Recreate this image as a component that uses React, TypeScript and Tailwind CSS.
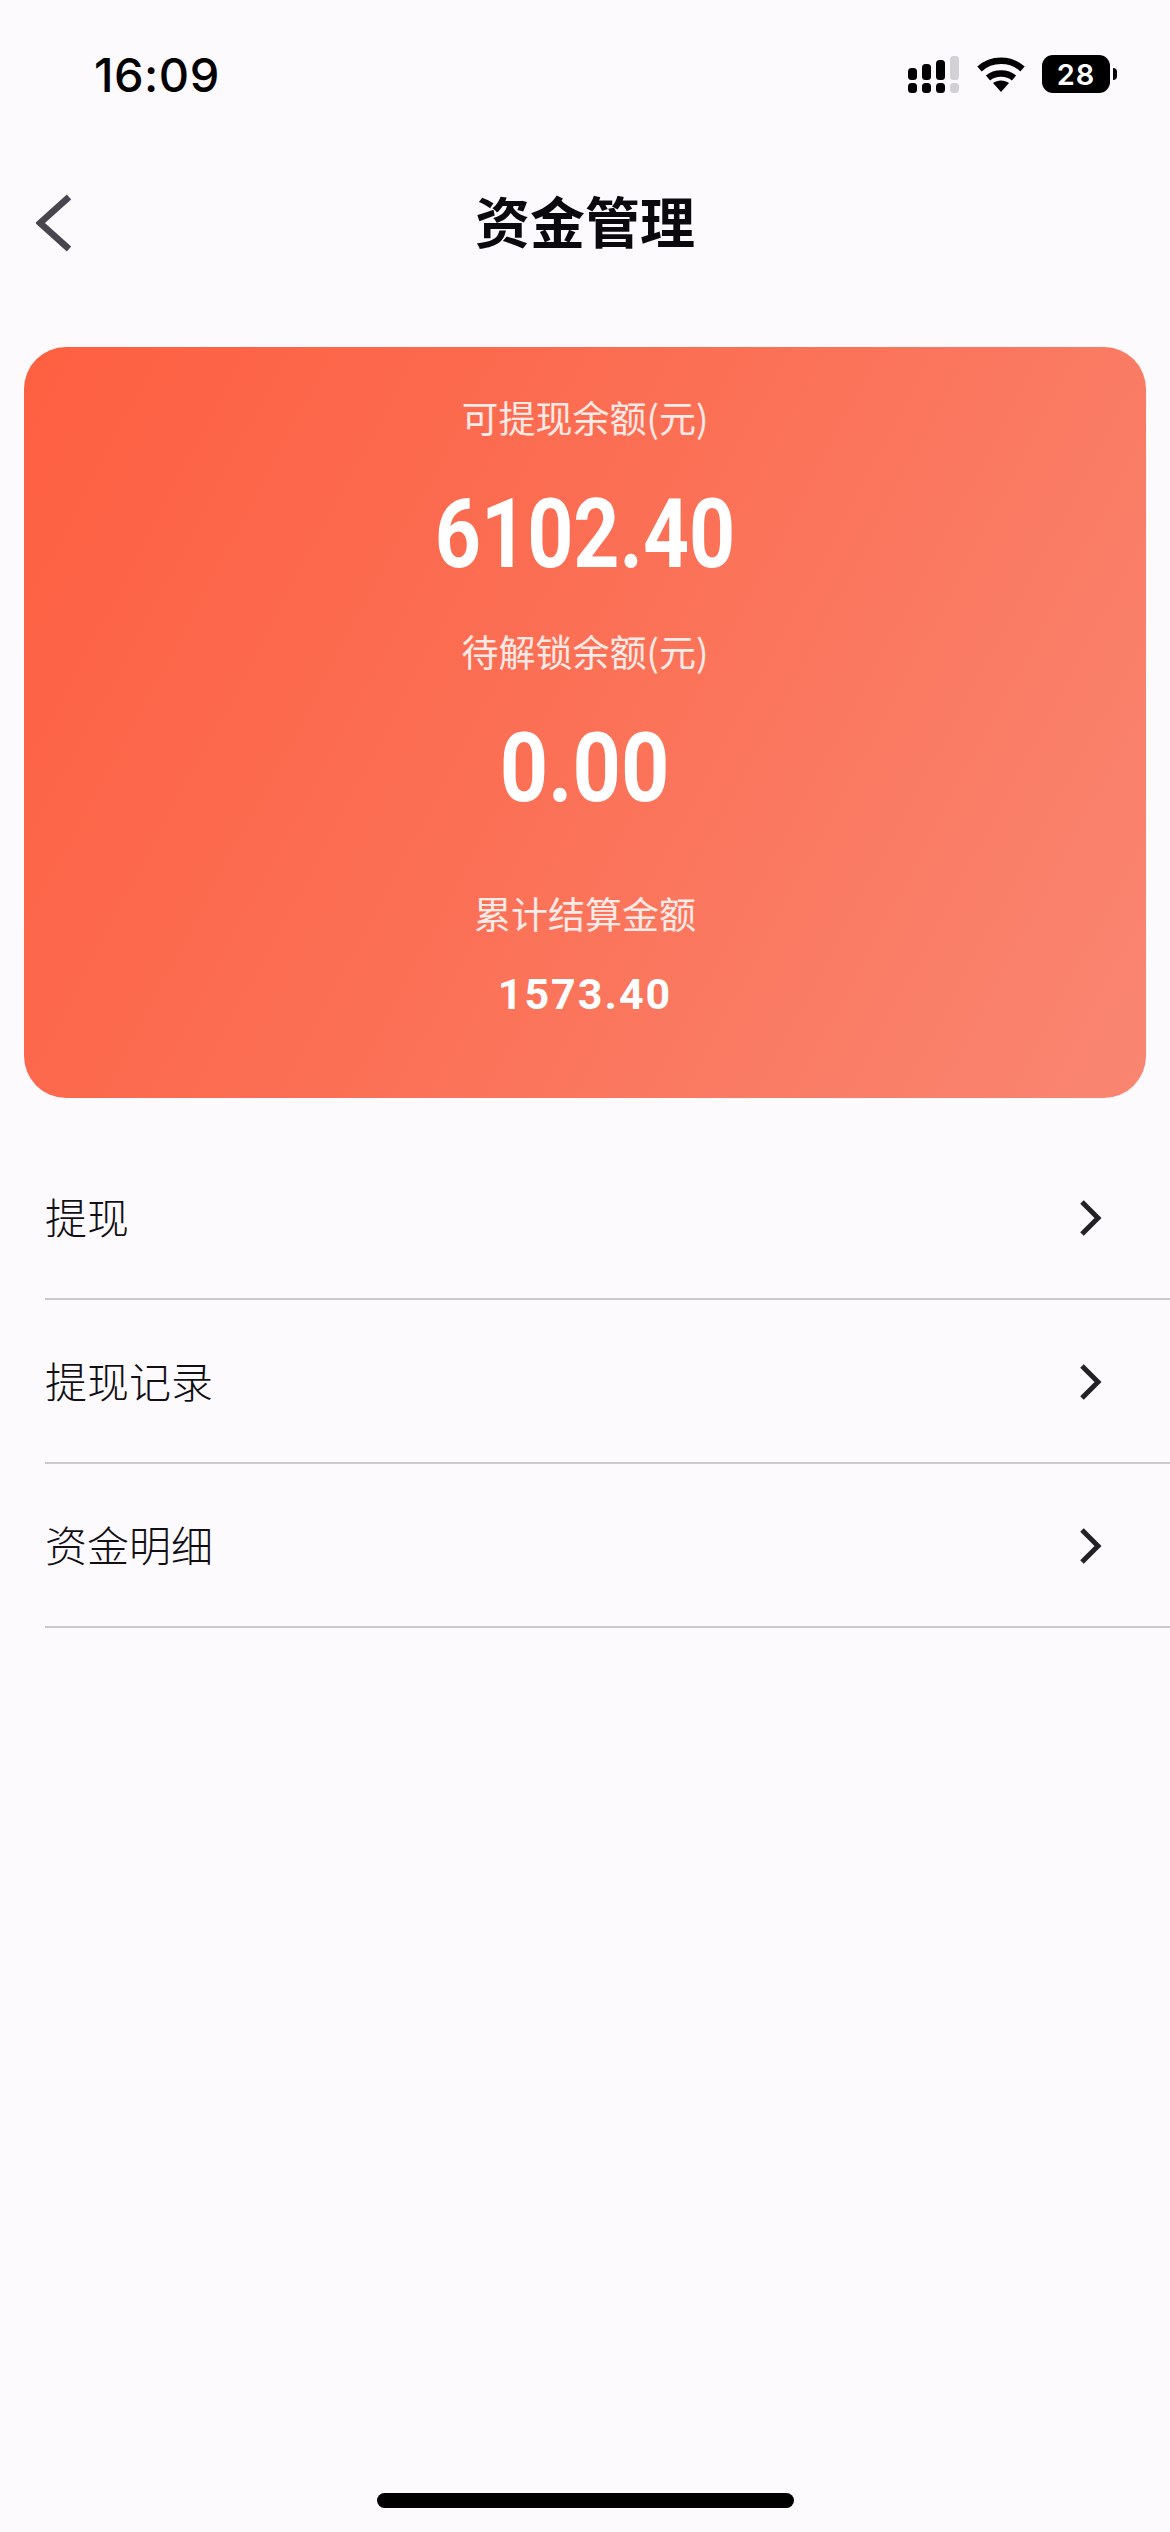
import React from "react";

const FONT = "font-['Noto_Sans_CJK_SC','Noto_Sans',sans-serif]";

const MENU = ["提现", "提现记录", "资金明细"];

function Signal() {
    const cols = [
        { x: 0, tall: 11, color: "#000" },
        { x: 14, tall: 15, color: "#000" },
        { x: 28, tall: 19, color: "#000" },
        { x: 42, tall: 23, color: "#d2d0d4" },
    ];
    return (
        <svg width="52" height="37" viewBox="0 0 52 37">
            {cols.map((c) => (
                <g key={c.x} fill={c.color}>
                    <rect x={c.x} y={24 - c.tall - 1} width="9" height={c.tall + 1} rx="3.5" />
                    <rect x={c.x} y="27" width="9" height="10" rx="3.5" />
                </g>
            ))}
        </svg>
    );
}

function Wifi() {
    return (
        <svg width="48" height="36" viewBox="0 0 48 36">
            <path d="M2.5 13 C14.5 2 33.5 2 45.5 13" fill="none" stroke="#000" strokeWidth="6.5" />
            <path d="M11 22 C18 16 30 16 37 22" fill="none" stroke="#000" strokeWidth="6.5" />
            <path d="M16 27 C20.5 23.5 27.5 23.5 32 27 L24 36 Z" fill="#000" />
        </svg>
    );
}

function Chevron({ left = false, color, width, height, stroke }: { left?: boolean; color: string; width: number; height: number; stroke: number }) {
    return (
        <svg width={width} height={height} viewBox={`0 0 ${width} ${height}`}>
            <path
                d={left
                    ? `M${width - 3} 3 L4 ${height / 2} L${width - 3} ${height - 3}`
                    : `M3 3 L${width - 4} ${height / 2} L3 ${height - 3}`}
                fill="none"
                stroke={color}
                strokeWidth={stroke}
            />
        </svg>
    );
}

export default function App() {
    return (
        <div className={`flex flex-col w-[1170px] h-[2532px] bg-[#fdfafe] overflow-hidden ${FONT}`}>
            {/* status bar */}
            <div className="flex items-center justify-between h-[148px] pl-[94px] pr-[53px] shrink-0">
                <span className="font-['Inter',sans-serif] text-[47px] font-medium text-black leading-none tracking-[0.5px]">16:09</span>
                <div className="flex items-center">
                    <Signal />
                    <div className="ml-[17px]"><Wifi /></div>
                    <div className="flex items-center ml-[17px]">
                        <div className="flex items-center justify-center w-[68px] h-[38px] rounded-[11px] bg-black">
                            <span className="font-['Inter',sans-serif] text-[29px] font-semibold text-white leading-none tracking-[1px]">28</span>
                        </div>
                        <div className="w-[4px] h-[12px] ml-[3px] rounded-r-full bg-black" />
                    </div>
                </div>
            </div>

            {/* header */}
            <div className="relative flex items-center justify-center h-[150px] shrink-0">
                <div className="absolute left-[36px] top-[46px]">
                    <Chevron left color="#49454f" width={36} height={58} stroke={6.5} />
                </div>
                <h1 className="mb-[8px] text-[55px] font-bold text-[#0b090d] leading-none">资金管理</h1>
            </div>

            {/* balance card */}
            <div className="flex flex-col items-center h-[751px] mx-[24px] mt-[49px] pt-[44px] rounded-[42px] bg-[linear-gradient(118deg,#fe5f41_0%,#fb6f54_45%,#f98672_100%)] text-white shrink-0">
                <p className="text-[37px] leading-[52px] text-white/85">可提现余额(元)</p>
                <p className="mt-[41px] font-['Roboto',sans-serif] text-[97px] font-bold leading-[100px] scale-x-[0.83]">6102.40</p>
                <p className="mt-[41px] text-[37px] leading-[52px] text-white/85">待解锁余额(元)</p>
                <p className="mt-[41px] font-['Roboto',sans-serif] text-[97px] font-bold leading-[100px] scale-x-[0.87]">0.00</p>
                <p className="mt-[69px] text-[37px] leading-[52px] text-white/85">累计结算金额</p>
                <p className="mt-[30px] font-['Roboto',sans-serif] text-[43px] font-bold leading-[50px] tracking-[2px]">1573.40</p>
            </div>

            {/* menu */}
            <div className="flex flex-col ml-[45px] mt-[38px]">
                {MENU.map((label) => (
                    <div key={label} className="flex items-center justify-between h-[164px] pr-[68px] border-b-2 border-[#cbc9cd]">
                        <span className="mb-[3px] text-[42px] font-light text-[#110e14] leading-none">{label}</span>
                        <div className="mt-[1px]">
                            <Chevron color="#232026" width={23} height={38} stroke={5} />
                        </div>
                    </div>
                ))}
            </div>

            {/* home indicator */}
            <div className="flex justify-center mt-auto pb-[24px]">
                <div className="w-[417px] h-[15px] rounded-full bg-black" />
            </div>
        </div>
    );
}
